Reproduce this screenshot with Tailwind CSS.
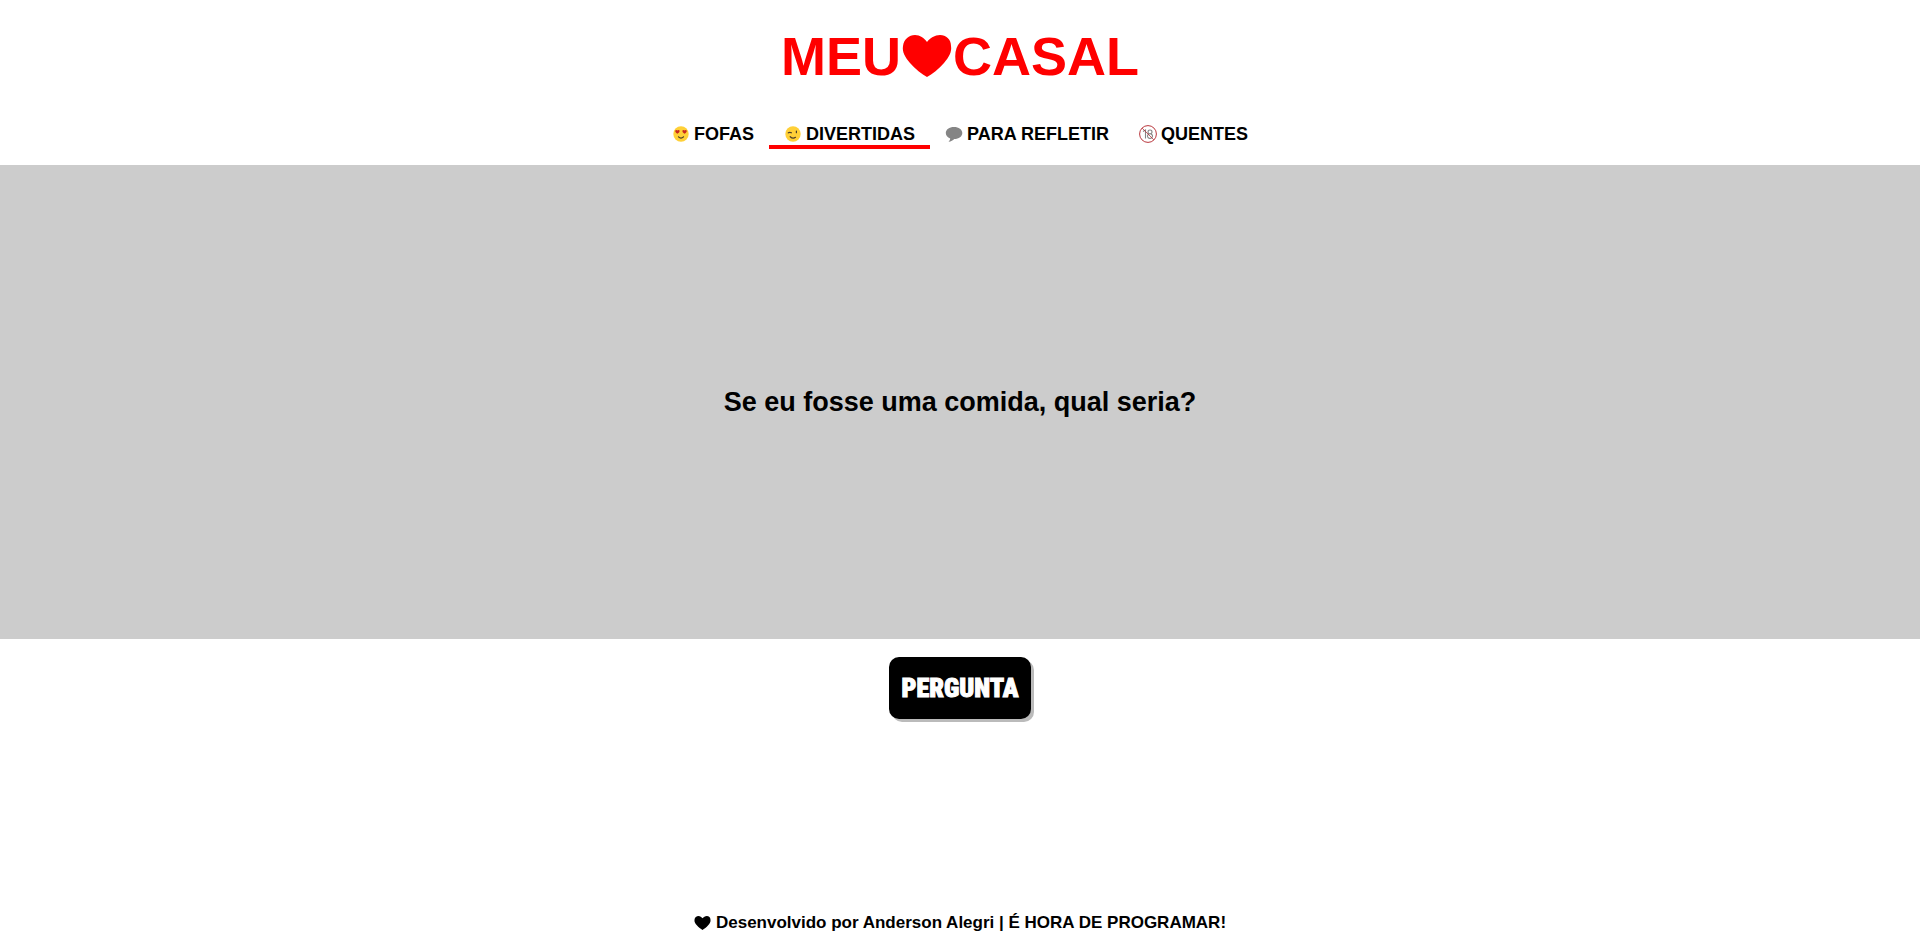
<!DOCTYPE html>
<html lang="pt-BR">
<head>
<meta charset="utf-8">
<meta name="viewport" content="width=device-width, initial-scale=1">
<title>Meu Casal</title>
<script src="https://cdn.jsdelivr.net/npm/@tailwindcss/browser@4"></script>
</head>
<body class="flex min-h-screen flex-col bg-white font-['Liberation_Sans',Arial,sans-serif] font-bold text-black">
<header class="flex flex-col items-center pb-4">
  <h1 class="flex items-center pt-6 text-[54px] leading-16 text-[#ff0000]">MEU<svg class="mx-px h-[42px] w-[50px]" viewBox="0 0 50 42" fill="currentColor" role="img" aria-label="coração"><path d="M25 42C20 39 13 34 8 28C3 22 0 17 1 11C2 4 7 0 13 0C18 0 22 3 25 7C28 3 33 0 38 0C44 0 49 4 49 11C50 17 47 22 42 28C37 34 30 39 25 42Z"/></svg>CASAL</h1>
  <nav class="mt-[35px] flex text-lg leading-[22px]" aria-label="Categorias">
    <a href="#fofas" class="flex items-center gap-1 border-b-4 border-transparent px-[15px]">
      <svg class="size-[18px]" viewBox="0 0 18 18" aria-hidden="true"><circle cx="9" cy="9" r="7.7" fill="#ffd037"/><path d="M5.5 8.8C3.6 7.7 2.9 6.6 3.3 5.6C3.7 4.7 5 4.7 5.5 5.6C6.3 4.6 7.6 5 7.6 6.1C7.6 7.1 6.8 8 5.5 8.8ZM12.5 8.8C14.4 7.7 15.1 6.6 14.7 5.6C14.3 4.7 13 4.7 12.5 5.6C11.7 4.6 10.4 5 10.4 6.1C10.4 7.1 11.2 8 12.5 8.8Z" fill="#c8281e"/><path d="M6.5 11.8Q9 14.4 11.5 11.8" fill="none" stroke="#4b3d2a" stroke-width="1.2" stroke-linecap="round"/></svg>
      FOFAS</a>
    <a href="#divertidas" aria-current="page" class="flex items-center gap-1 border-b-4 border-[#ff0000] px-[15px]">
      <svg class="size-[18px]" viewBox="0 0 18 18" aria-hidden="true"><circle cx="9" cy="9" r="7.7" fill="#ffd037"/><g fill="none" stroke="#4b3d2a" stroke-width="1.2" stroke-linecap="round"><path d="M4.3 7.8Q5.8 6.8 7.4 7.8M12.4 6V7.7M6.2 11.7Q8.8 14.1 11.5 12.3"/></g></svg>
      DIVERTIDAS</a>
    <a href="#para-refletir" class="flex items-center gap-1 border-b-4 border-transparent px-[15px]">
      <svg class="size-[18px]" viewBox="0 0 18 18" aria-hidden="true"><path d="M9 2C4.2 2 .8 4.6 .8 8C.8 10.4 2.5 12.5 5.2 13.4C5.1 14.7 4.5 15.7 3.5 16.7C6 16.5 8 15.5 9.2 14C14 14 17.3 11.4 17.3 8C17.3 4.6 13.8 2 9 2Z" fill="#858585"/></svg>
      PARA REFLETIR</a>
    <a href="#quentes" class="flex items-center gap-1 border-b-4 border-transparent px-[15px]">
      <svg class="size-[18px]" viewBox="0 0 18 18" aria-hidden="true"><g fill="none"><path d="M4 6.5L6.5 5V13.5M11 5A2 1.9 0 1 0 11 8.8A2 1.9 0 1 0 11 5ZM11 8.8A2.5 2.3 0 1 0 11 13.4A2.5 2.3 0 1 0 11 8.8Z" stroke="#858585" stroke-width="1.1"/><circle cx="9" cy="9" r="8.4" stroke="#b9373d"/><path d="M3.1 3.1L14.9 14.9" stroke="#b9373d" stroke-width=".8"/></g></svg>
      QUENTES</a>
  </nav>
</header>
<main class="flex flex-col items-center">
  <section class="flex h-[50.1vh] w-full items-center justify-center bg-[#cccccc] px-4">
    <p class="text-center text-[27px] leading-8">Se eu fosse uma comida, qual seria?</p>
  </section>
  <button type="button" class="mt-[18px] rounded-[10px] bg-black px-[13px] py-[13px] font-[Impact,'Liberation_Sans_Narrow','Roboto_Condensed','Liberation_Sans',sans-serif] text-[26px] leading-9 font-black text-white shadow-[3px_3px_0_#bbbbbb] [-webkit-text-stroke:1px_white]">PERGUNTA</button>
</main>
<footer class="mt-auto flex items-center justify-center gap-[5px] pb-[11px] text-[17px] leading-6">
  <svg class="h-[14px] w-[17px]" viewBox="0 0 50 42" fill="currentColor" aria-hidden="true"><path d="M25 42C20 39 13 34 8 28C3 22 0 17 1 11C2 4 7 0 13 0C18 0 22 3 25 7C28 3 33 0 38 0C44 0 49 4 49 11C50 17 47 22 42 28C37 34 30 39 25 42Z"/></svg>
  <p>Desenvolvido por Anderson Alegri | É HORA DE PROGRAMAR!</p>
</footer>
</body>
</html>
